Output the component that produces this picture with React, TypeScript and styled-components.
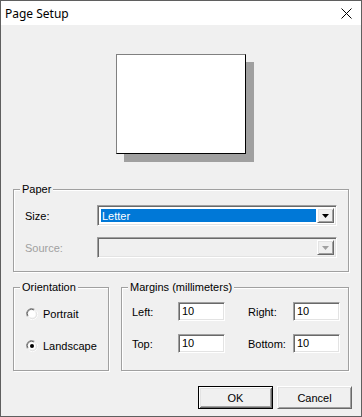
import React from 'react';
import styled, { createGlobalStyle, css } from 'styled-components';

const GlobalStyle = createGlobalStyle`
  html, body {
    margin: 0;
    padding: 0;
    background: #f0f0f0;
  }
  * {
    box-sizing: border-box;
  }
`;

const sunken = css`
  border-style: solid;
  border-width: 1px;
  border-color: #a0a0a0 #ffffff #ffffff #a0a0a0;
  box-shadow: inset 1px 1px 0 #696969, inset -1px -1px 0 #e3e3e3;
`;

const raised = css`
  border-style: solid;
  border-width: 1px;
  border-color: #ffffff #696969 #696969 #ffffff;
  box-shadow: inset 1px 1px 0 #e3e3e3, inset -1px -1px 0 #a0a0a0;
`;

const Window = styled.div`
  width: 362px;
  height: 417px;
  border: 1px solid #5f5f5f;
  background: #f0f0f0;
  display: flex;
  flex-direction: column;
  font-family: "Liberation Sans", Arial, sans-serif;
  font-size: 11px;
  color: #000;
`;

const TitleBar = styled.div`
  height: 24px;
  background: #fff;
  display: flex;
  align-items: center;
  justify-content: space-between;
  padding: 0 9px 0 4px;
  font-family: "Noto Sans", "Open Sans", sans-serif;
  font-size: 12px;
`;

const Close = styled.svg`
  width: 11px;
  height: 11px;
`;

const Body = styled.div`
  flex: 1;
  display: flex;
  flex-direction: column;
  padding: 0 12px;
`;

const Preview = styled.div`
  display: flex;
  justify-content: center;
  padding-top: 29px;
  height: 164px;
`;

const Sheet = styled.div`
  width: 130px;
  height: 100px;
  background: #fff;
  border-style: solid;
  border-width: 1px;
  border-color: #808080 #000 #000 #808080;
  box-shadow: 8px 8px 0 #a0a0a0;
`;

const Group = styled.div<{ $w?: number; $h: number }>`
  position: relative;
  width: ${p => (p.$w ? `${p.$w}px` : 'auto')};
  height: ${p => p.$h}px;
  border: 1px solid #a0a0a0;
  box-shadow: inset 1px 1px 0 #fff, 1px 1px 0 #fff;
`;

const Legend = styled.span`
  position: absolute;
  top: -7px;
  left: 6px;
  padding: 0 2px;
  background: #f0f0f0;
  line-height: 13px;
`;

const PaperGrid = styled.div`
  display: grid;
  grid-template-columns: 72px 1fr;
  grid-auto-rows: 21px;
  row-gap: 11px;
  align-items: center;
  padding: 15px 11px 0 11px;
`;

const Label = styled.span<{ $disabled?: boolean }>`
  color: ${p => (p.$disabled ? '#a0a0a0' : '#000')};
`;

const Combo = styled.div<{ $disabled?: boolean }>`
  ${sunken};
  height: 21px;
  display: flex;
  padding: 2px;
  background: ${p => (p.$disabled ? '#f0f0f0' : '#fff')};
`;

const ComboValue = styled.div`
  flex: 1;
  margin: 1px 1px 1px 1px;
  background: #0078d7;
  color: #fff;
  line-height: 15px;
  padding-left: 1px;
`;

const ComboEmpty = styled.div`
  flex: 1;
`;

const DropButton = styled.div`
  ${raised};
  width: 17px;
  display: flex;
  align-items: center;
  justify-content: center;
  background: #f0f0f0;
`;

const Arrow = styled.svg`
  width: 7px;
  height: 4px;
`;

const Row = styled.div`
  display: flex;
  gap: 12px;
  margin-top: 15px;
`;

const RadioList = styled.div`
  display: flex;
  flex-direction: column;
  gap: 19px;
  padding: 19px 0 0 12px;
`;

const RadioItem = styled.label`
  display: flex;
  align-items: center;
  gap: 5px;
  height: 13px;
`;

const MarginGrid = styled.div`
  display: grid;
  grid-template-columns: 46px 47px 23px 45px 47px;
  grid-auto-rows: 19px;
  row-gap: 13px;
  align-items: center;
  padding: 14px 0 0 10px;
`;

const Field = styled.div`
  ${sunken};
  height: 19px;
  background: #fff;
  padding: 1px 0 0 3px;
  line-height: 15px;
`;

const Buttons = styled.div`
  display: flex;
  justify-content: flex-end;
  gap: 4px;
  margin: 15px -3px 0 0;
`;

const Button = styled.button<{ $default?: boolean }>`
  width: 75px;
  height: 23px;
  padding: 0;
  font-family: inherit;
  font-size: 11px;
  color: #000;
  background: #f0f0f0;
  ${p =>
    p.$default
      ? css`
          border: 1px solid #000;
          box-shadow: inset 1px 1px 0 #fff, inset -1px -1px 0 #696969, inset 2px 2px 0 #e3e3e3,
            inset -2px -2px 0 #a0a0a0;
        `
      : raised};
`;

const Radio = ({ checked }: { checked?: boolean }) => (
  <svg width="12" height="12" viewBox="0 0 12 12">
    <path d="M1.2 8.5 A5.3 5.3 0 0 1 8.5 1.2" stroke="#a0a0a0" strokeWidth="1" fill="none" />
    <path d="M2 8 A4.3 4.3 0 0 1 8 2" stroke="#696969" strokeWidth="1" fill="none" />
    <path d="M3.5 10.8 A5.3 5.3 0 0 0 10.8 3.5" stroke="#ffffff" strokeWidth="1" fill="none" />
    <path d="M4 10 A4.3 4.3 0 0 0 10 4" stroke="#e3e3e3" strokeWidth="1" fill="none" />
    <circle cx="6" cy="6" r="3.6" fill="#fff" />
    {checked && <circle cx="6" cy="6" r="2" fill="#000" />}
  </svg>
);

const DownArrow = ({ disabled }: { disabled?: boolean }) => (
  <Arrow viewBox="0 0 7 4">
    <polygon points="0,0 7,0 3.5,4" fill={disabled ? '#a0a0a0' : '#000'} />
  </Arrow>
);

export default function App() {
  return (
    <>
      <GlobalStyle />
      <Window>
        <TitleBar>
          <span>Page Setup</span>
          <Close viewBox="0 0 11 11">
            <path d="M0.5 0.5 L10.5 10.5 M10.5 0.5 L0.5 10.5" stroke="#000" strokeWidth="1" />
          </Close>
        </TitleBar>
        <Body>
          <Preview>
            <Sheet />
          </Preview>
          <Group $h={83}>
            <Legend>Paper</Legend>
            <PaperGrid>
              <Label>Size:</Label>
              <Combo>
                <ComboValue>Letter</ComboValue>
                <DropButton>
                  <DownArrow />
                </DropButton>
              </Combo>
              <Label $disabled>Source:</Label>
              <Combo $disabled>
                <ComboEmpty />
                <DropButton>
                  <DownArrow disabled />
                </DropButton>
              </Combo>
            </PaperGrid>
          </Group>
          <Row>
            <Group $w={96} $h={84}>
              <Legend>Orientation</Legend>
              <RadioList>
                <RadioItem>
                  <Radio />
                  Portrait
                </RadioItem>
                <RadioItem>
                  <Radio checked />
                  Landscape
                </RadioItem>
              </RadioList>
            </Group>
            <Group $w={228} $h={84}>
              <Legend>Margins (millimeters)</Legend>
              <MarginGrid>
                <Label>Left:</Label>
                <Field>10</Field>
                <span />
                <Label>Right:</Label>
                <Field>10</Field>
                <Label>Top:</Label>
                <Field>10</Field>
                <span />
                <Label>Bottom:</Label>
                <Field>10</Field>
              </MarginGrid>
            </Group>
          </Row>
          <Buttons>
            <Button $default>OK</Button>
            <Button>Cancel</Button>
          </Buttons>
        </Body>
      </Window>
    </>
  );
}
